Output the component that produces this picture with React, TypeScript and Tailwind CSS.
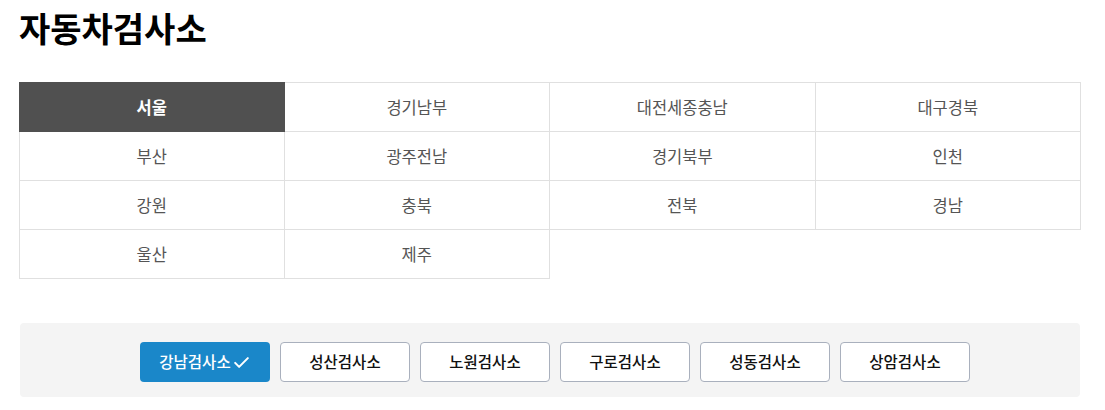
import React from "react";

const regions = [
  "서울", "경기남부", "대전세종충남", "대구경북",
  "부산", "광주전남", "경기북부", "인천",
  "강원", "충북", "전북", "경남",
  "울산", "제주",
];

const stations = ["강남검사소", "성산검사소", "노원검사소", "구로검사소", "성동검사소", "상암검사소"];

export default function App() {
  return (
    <div className="w-[1105px] h-[410px] bg-white" style={{ fontFamily: '"Noto Sans CJK KR", "Noto Sans", sans-serif' }}>
      <h1 className="pl-[19px] pt-[3px] text-[34px] leading-[49px] font-bold text-black">자동차검사소</h1>
      <div className="ml-[19px] mt-[30px] w-[1062px] grid grid-cols-4">
        {regions.map((r, i) => {
          const sel = i === 0;
          const firstRow = i < 4;
          const firstCol = i % 4 === 0;
          return (
            <div
              key={r}
              className={
                "flex items-center justify-center text-[16.5px] border-r border-b " +
                (firstRow ? "h-[50px] border-t " : "h-[49px] ") +
                (firstCol ? "border-l " : "") +
                (sel ? "bg-[#505050] border-[#505050] text-white font-bold" : "border-[#e0e0e0] text-[#555555]")
              }
            >
              {r}
            </div>
          );
        })}
      </div>
      <div className="ml-[20px] mt-[44px] w-[1060px] bg-[#f4f4f4] rounded-[4px] pt-[19px] pb-[15px] flex justify-center">
        {stations.map((s, i) => (
          <button
            key={s}
            className={
              "ml-[10px] w-[130px] h-[40px] rounded-[4px] flex items-center justify-center text-[15.5px] font-medium " +
              (i === 0 ? "bg-[#1a87c9] text-white" : "bg-white border border-[#a9b0bd] text-[#111111]")
            }
          >
            {s}
            {i === 0 && (
              <svg width="19" height="19" viewBox="0 0 24 24" fill="none" stroke="white" strokeWidth="2.6" strokeLinecap="round" strokeLinejoin="round" className="ml-[1px]">
                <path d="M4 12.5l5 5L20 6.5" />
              </svg>
            )}
          </button>
        ))}
      </div>
    </div>
  );
}
